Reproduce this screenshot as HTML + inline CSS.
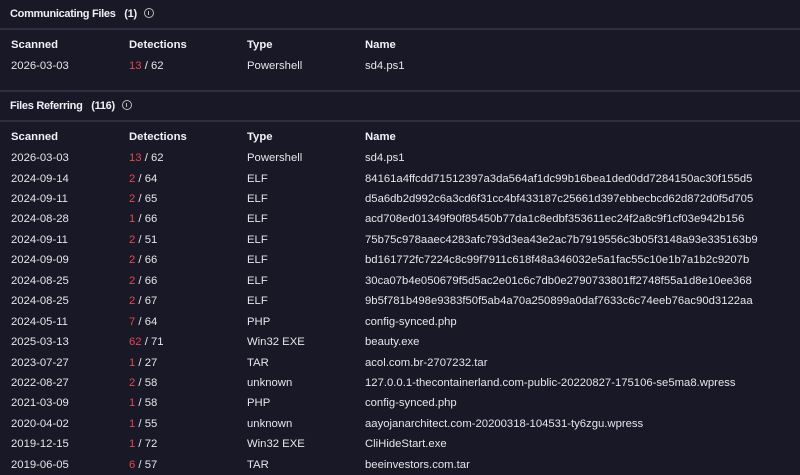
<!DOCTYPE html>
<html><head><style>
body{margin:0;width:800px;height:475px;background:#181826;color:#e6e6ea;font-family:"Liberation Sans",sans-serif;font-size:11.3px;overflow:hidden;position:relative}
.t{position:absolute;left:10px;font-weight:bold;font-size:11px;letter-spacing:-0.3px;color:#f0f0f4}
.t span{margin-left:6px}
.i{display:inline-block;width:8px;height:8px;border:1px solid #bbb;border-radius:50%;margin-left:7px;vertical-align:-1px;position:relative}
.i:after{content:"";position:absolute;left:3.5px;top:2px;width:1px;height:4px;background:#bbb}
.l{position:absolute;left:0;width:800px;height:2px;background:#2c2f40}
.r{position:absolute;left:0;height:20.45px;line-height:20.45px;width:800px}
.r div{position:absolute;white-space:nowrap}
.c1{left:11px}.c2{left:129px}.c3{left:247px}.c4{left:365px}
.h{font-weight:bold;color:#f2f2f6}
.red{color:#e5484d}
</style></head><body>
<div class="t" style="top:8px">Communicating Files <span>(1)</span><i class="i"></i></div>
<div class="l" style="top:28px"></div>
<div class="r h" style="top:35px"><div class="c1">Scanned</div><div class="c2">Detections</div><div class="c3">Type</div><div class="c4">Name</div></div>
<div class="r" style="top:56px"><div class="c1">2026-03-03</div><div class="c2"><span class="red">13</span> / 62</div><div class="c3">Powershell</div><div class="c4">sd4.ps1</div></div>
<div class="l" style="top:90px"></div>
<div class="t" style="top:100px">Files Referring <span>(116)</span><i class="i"></i></div>
<div class="l" style="top:120px"></div>
<div class="r h" style="top:127px"><div class="c1">Scanned</div><div class="c2">Detections</div><div class="c3">Type</div><div class="c4">Name</div></div>
<div class="r" style="top:148px"><div class="c1">2026-03-03</div><div class="c2"><span class="red">13</span> / 62</div><div class="c3">Powershell</div><div class="c4">sd4.ps1</div></div>
<div class="r" style="top:168.5px"><div class="c1">2024-09-14</div><div class="c2"><span class="red">2</span> / 64</div><div class="c3">ELF</div><div class="c4">84161a4ffcdd71512397a3da564af1dc99b16bea1ded0dd7284150ac30f155d5</div></div>
<div class="r" style="top:189px"><div class="c1">2024-09-11</div><div class="c2"><span class="red">2</span> / 65</div><div class="c3">ELF</div><div class="c4">d5a6db2d992c6a3cd6f31cc4bf433187c25661d397ebbecbcd62d872d0f5d705</div></div>
<div class="r" style="top:209.4px"><div class="c1">2024-08-28</div><div class="c2"><span class="red">1</span> / 66</div><div class="c3">ELF</div><div class="c4">acd708ed01349f90f85450b77da1c8edbf353611ec24f2a8c9f1cf03e942b156</div></div>
<div class="r" style="top:229.8px"><div class="c1">2024-09-11</div><div class="c2"><span class="red">2</span> / 51</div><div class="c3">ELF</div><div class="c4">75b75c978aaec4283afc793d3ea43e2ac7b7919556c3b05f3148a93e335163b9</div></div>
<div class="r" style="top:250.3px"><div class="c1">2024-09-09</div><div class="c2"><span class="red">2</span> / 66</div><div class="c3">ELF</div><div class="c4">bd161772fc7224c8c99f7911c618f48a346032e5a1fac55c10e1b7a1b2c9207b</div></div>
<div class="r" style="top:270.7px"><div class="c1">2024-08-25</div><div class="c2"><span class="red">2</span> / 66</div><div class="c3">ELF</div><div class="c4">30ca07b4e050679f5d5ac2e01c6c7db0e2790733801ff2748f55a1d8e10ee368</div></div>
<div class="r" style="top:291.2px"><div class="c1">2024-08-25</div><div class="c2"><span class="red">2</span> / 67</div><div class="c3">ELF</div><div class="c4">9b5f781b498e9383f50f5ab4a70a250899a0daf7633c6c74eeb76ac90d3122aa</div></div>
<div class="r" style="top:311.6px"><div class="c1">2024-05-11</div><div class="c2"><span class="red">7</span> / 64</div><div class="c3">PHP</div><div class="c4">config-synced.php</div></div>
<div class="r" style="top:332px"><div class="c1">2025-03-13</div><div class="c2"><span class="red">62</span> / 71</div><div class="c3">Win32 EXE</div><div class="c4">beauty.exe</div></div>
<div class="r" style="top:352.5px"><div class="c1">2023-07-27</div><div class="c2"><span class="red">1</span> / 27</div><div class="c3">TAR</div><div class="c4">acol.com.br-2707232.tar</div></div>
<div class="r" style="top:373px"><div class="c1">2022-08-27</div><div class="c2"><span class="red">2</span> / 58</div><div class="c3">unknown</div><div class="c4">127.0.0.1-thecontainerland.com-public-20220827-175106-se5ma8.wpress</div></div>
<div class="r" style="top:393.4px"><div class="c1">2021-03-09</div><div class="c2"><span class="red">1</span> / 58</div><div class="c3">PHP</div><div class="c4">config-synced.php</div></div>
<div class="r" style="top:413.8px"><div class="c1">2020-04-02</div><div class="c2"><span class="red">1</span> / 55</div><div class="c3">unknown</div><div class="c4">aayojanarchitect.com-20200318-104531-ty6zgu.wpress</div></div>
<div class="r" style="top:434.3px"><div class="c1">2019-12-15</div><div class="c2"><span class="red">1</span> / 72</div><div class="c3">Win32 EXE</div><div class="c4">CliHideStart.exe</div></div>
<div class="r" style="top:454.7px"><div class="c1">2019-06-05</div><div class="c2"><span class="red">6</span> / 57</div><div class="c3">TAR</div><div class="c4">beeinvestors.com.tar</div></div>
</body></html>
